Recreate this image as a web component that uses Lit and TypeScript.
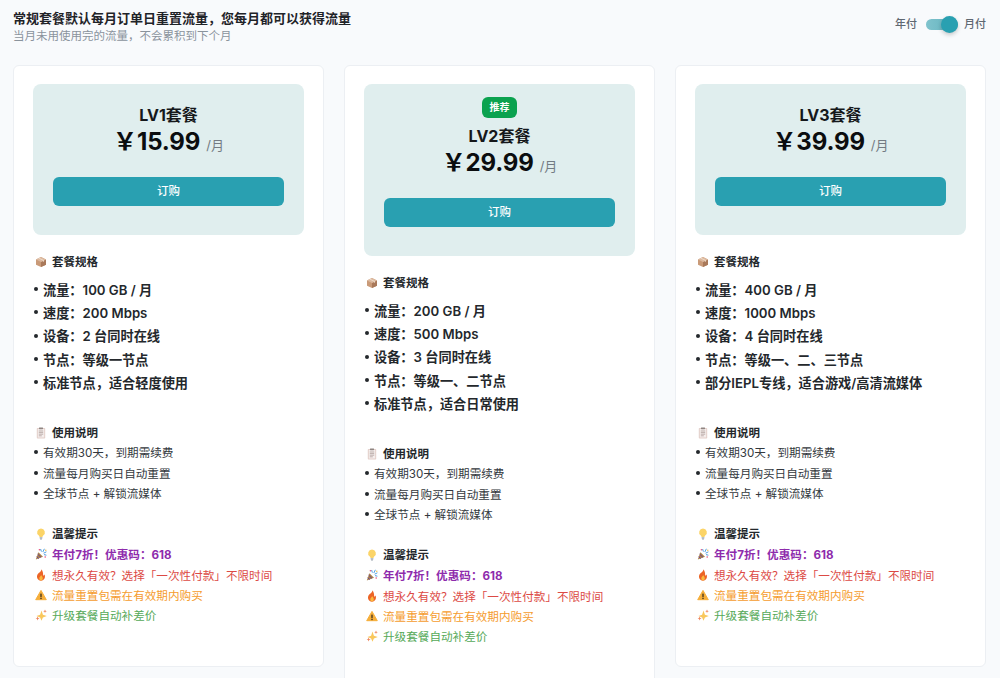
import { LitElement, css, html, svg } from "lit";
import { customElement } from "lit/decorators.js";

const icons = {
  box: svg`<path d="M6 1 11 3.4V8.7L6 11 1 8.7V3.4Z" fill="#c99a78"/><path d="M6 6 11 3.4V8.7L6 11Z" fill="#a9795a"/><path d="M1 3.4 6 1 11 3.4 6 6Z" fill="#dcb99f"/><path d="M3.2 2.3 8.3 4.7V6L9 5.7V4.3L4 1.8Z" fill="#eeddcc"/>`,
  note: svg`<rect x="1.800" y="1" width="8.400" height="10.500" rx=".8" fill="#e3cfca"/><rect x="2.800" y="2" width="6.400" height="8.500" fill="#f5eeec"/><rect x="4" y=".4" width="4" height="1.800" rx=".4" fill="#8f8582"/><path d="M3.800 4h4.400M3.800 5.600h4.400M3.800 7.200h4.400M3.800 8.800h3" stroke="#a89794" stroke-width=".7"/>`,
  bulb: svg`<path d="M6 .4a3.900 3.900 0 0 0-2.200 7.100c.5.4.7.9.7 1.400h3c0-.5.2-1 .7-1.400A3.900 3.900 0 0 0 6 .4Z" fill="#fbd468"/><rect x="4.500" y="8.900" width="3" height="1.600" rx=".5" fill="#b9c0c8"/><rect x="5.100" y="10.400" width="1.800" height="1" rx=".4" fill="#7b8794"/>`,
  party: svg`<path d="M.8 11.600 3.400 4.200l4.600 4.600Z" fill="#a98348"/><path d="M1.700 8.700 3.700 10.600M2.700 6.200 6 9.400" stroke="#6e3f97" stroke-width="1"/><path d="M5.600 1 6.400 3.600M9.400.8 7.800 4M11.400 3.800 8.600 5.200M11.400 7.200 9 6.600" stroke="#4f9fe0" stroke-width="1"/><circle cx="4.400" cy="1.800" r=".8" fill="#e8507c"/><circle cx="10.800" cy="2.200" r=".7" fill="#f2b93e"/><circle cx="10.200" cy="9" r=".8" fill="#e8507c"/>`,
  fire: svg`<path d="M6.200.3C6.800 2.500 4 3.400 2.500 5.600 1.200 7.800 2.500 11.700 6 11.700s4.700-3.600 3.500-6.100c-.4.800-.9 1.100-1.400 1.200C8.400 4.500 7.800 1.800 6.200.3Z" fill="#ec6526"/><path d="M6 6c.2 1-1.700 1.800-1.700 3.300 0 1.300.9 2.300 1.700 2.300s1.800-1 1.800-2.300C7.800 8 6.800 7 6 6Z" fill="#fbb93e"/>`,
  warn: svg`<path d="M6 1.400 11.300 10.700H.7Z" fill="#f6ae3a" stroke="#f6ae3a" stroke-linejoin="round"/><rect x="5.300" y="4.400" width="1.400" height="3.800" rx=".5" fill="#4a3a20"/><circle cx="6" cy="9.500" r=".8" fill="#4a3a20"/>`,
  spark: svg`<path d="M6.500 1.600 7.900 5.700l3.900 1.400-3.900 1.400-1.400 3.300-1.400-3.300L1.400 7.100 5.100 5.700Z" fill="#f9c75c"/><path d="M2.600 7.600 3.200 9 4.600 9.500 3.200 10 2.600 11.400 2 10 .6 9.500 2 9Z" fill="#ee8660"/><path d="M10 .4 10.500 1.800 11.800 2.300 10.500 2.800 10 4.100 9.500 2.800 8.200 2.300 9.500 1.800Z" fill="#ee8660"/>`,
};

type IconName = keyof typeof icons;

const icon = (name: IconName) =>
  html`<svg class="emoji" viewBox="0 0 12 12" aria-hidden="true">${icons[name]}</svg>`;

interface Plan {
  name: string;
  price: string;
  badge?: string;
  specs: string[];
}

const plans: Plan[] = [
  {
    name: "LV1套餐",
    price: "15.99",
    specs: [
      "流量：100 GB / 月",
      "速度：200 Mbps",
      "设备：2 台同时在线",
      "节点：等级一节点",
      "标准节点，适合轻度使用",
    ],
  },
  {
    name: "LV2套餐",
    price: "29.99",
    badge: "推荐",
    specs: [
      "流量：200 GB / 月",
      "速度：500 Mbps",
      "设备：3 台同时在线",
      "节点：等级一、二节点",
      "标准节点，适合日常使用",
    ],
  },
  {
    name: "LV3套餐",
    price: "39.99",
    specs: [
      "流量：400 GB / 月",
      "速度：1000 Mbps",
      "设备：4 台同时在线",
      "节点：等级一、二、三节点",
      "部分IEPL专线，适合游戏/高清流媒体",
    ],
  },
];

const usage = ["有效期30天，到期需续费", "流量每月购买日自动重置", "全球节点 + 解锁流媒体"];

const tips: { icon: IconName; text: string; cls: string }[] = [
  { icon: "party", text: "年付7折！优惠码：618", cls: "purple" },
  { icon: "fire", text: "想永久有效？选择「一次性付款」不限时间", cls: "red" },
  { icon: "warn", text: "流量重置包需在有效期内购买", cls: "orange" },
  { icon: "spark", text: "升级套餐自动补差价", cls: "green" },
];

@customElement("app-root")
export class AppRoot extends LitElement {
  static styles = css`
    :host {
      display: block;
      height: 678px;
      overflow: hidden;
      box-sizing: border-box;
      padding: 10px 14px 0 13px;
      background: #f8fafc;
      color: #1f2328;
      font-family: Inter, "Noto Sans CJK SC", sans-serif;
    }

    .top {
      display: flex;
      justify-content: space-between;
      align-items: flex-start;
      height: 55px;
    }

    .top h1 {
      margin: 0;
      font-size: 13px;
      line-height: 16px;
      font-weight: 700;
    }

    .top p {
      margin: 2px 0 0;
      font-size: 11.5px;
      line-height: 16px;
      color: #8a939c;
    }

    .switch {
      display: flex;
      align-items: center;
      gap: 8px;
      margin: 6px 0 0;
      font-size: 11px;
      line-height: 17px;
      font-weight: 500;
      color: #5f6871;
    }

    .track {
      position: relative;
      width: 32px;
      height: 11px;
      margin: 0 -2px 0 1px;
      border-radius: 6px;
      background: linear-gradient(90deg, #7fc3cd, #5fb0bc);
    }

    .thumb {
      position: absolute;
      right: 0;
      top: -3px;
      width: 17px;
      height: 17px;
      border-radius: 50%;
      background: #29a0b1;
      box-shadow: 0 2px 4px rgba(0, 0, 0, 0.2);
    }

    .cards {
      display: grid;
      grid-template-columns: repeat(3, 311px);
      gap: 20px;
      align-items: start;
    }

    .card {
      box-sizing: border-box;
      padding: 18px 19px 40px;
      background: #fff;
      border: 1px solid #eceff3;
      border-radius: 6px;
    }

    .hero {
      display: flex;
      flex-direction: column;
      align-items: center;
      padding: 20px 20px 29px;
      background: #e0eeee;
      border-radius: 8px;
    }

    .badge {
      margin: -7px 0 7px;
      padding: 0 7.5px;
      font-size: 10px;
      line-height: 21px;
      font-weight: 700;
      color: #fff;
      background: #0ba24f;
      border-radius: 6px;
    }

    .name {
      font-size: 16px;
      line-height: 22px;
      font-weight: 700;
      color: #15181b;
    }

    .price {
      display: flex;
      align-items: baseline;
      margin: 0 0 16px;
      font-size: 24px;
      line-height: 32px;
      font-weight: 700;
      letter-spacing: -0.15px;
      color: #0b0d0f;
    }

    .price small {
      margin-left: 6px;
      font-size: 13px;
      font-weight: 400;
      letter-spacing: 0;
      color: #737b83;
    }

    .buy {
      width: 100%;
      height: 29px;
      border: 0;
      border-radius: 6px;
      padding: 0;
      font: 500 11.5px/29px Inter, "Noto Sans CJK SC", sans-serif;
      color: #fff;
      background: #29a0b1;
    }

    .section {
      display: flex;
      align-items: center;
      gap: 5px;
      margin: 0 0 0 2px;
      font-size: 11.5px;
      line-height: 16px;
      font-weight: 700;
      color: #24282c;
    }

    .section.first {
      margin-top: 18.5px;
    }

    .emoji {
      flex: none;
      width: 12px;
      height: 12px;
    }

    ul {
      list-style: none;
      margin: 0;
      padding: 0;
    }

    li {
      display: flex;
      align-items: center;
    }

    li.dot::before {
      content: "";
      flex: none;
      width: 4px;
      height: 4px;
      margin: 0 5px 0 1px;
      border-radius: 50%;
      background: #24282c;
    }

    .specs {
      margin: 8px 0 31px;
    }

    .specs li {
      height: 23.3px;
      font-size: 13.2px;
      font-weight: 600;
      color: #24282c;
    }

    .usage {
      margin: 1px 0 22.5px;
    }

    .usage li {
      height: 20.5px;
      font-size: 11.6px;
      color: #33383d;
    }

    .tips {
      margin-top: 2px;
    }

    .tips li {
      gap: 5px;
      height: 20.4px;
      margin-left: 2px;
      font-size: 11.6px;
    }

    .purple {
      font-weight: 700;
      color: #8e2bac;
    }

    .red {
      color: #dc4a45;
    }

    .orange {
      color: #f59c2e;
    }

    .green {
      color: #55a958;
    }
  `;

  private renderCard(plan: Plan) {
    return html`
      <section class="card">
        <div class="hero">
          ${plan.badge ? html`<span class="badge">${plan.badge}</span>` : ""}
          <div class="name">${plan.name}</div>
          <div class="price">￥${plan.price}<small>/月</small></div>
          <button class="buy">订购</button>
        </div>
        <div class="section first">${icon("box")}套餐规格</div>
        <ul class="specs">
          ${plan.specs.map((s) => html`<li class="dot">${s}</li>`)}
        </ul>
        <div class="section">${icon("note")}使用说明</div>
        <ul class="usage">
          ${usage.map((s) => html`<li class="dot">${s}</li>`)}
        </ul>
        <div class="section">${icon("bulb")}温馨提示</div>
        <ul class="tips">
          ${tips.map(
            (t) => html`<li class=${t.cls}>${icon(t.icon)}${t.text}</li>`
          )}
        </ul>
      </section>
    `;
  }

  protected render() {
    return html`
      <header class="top">
        <div>
          <h1>常规套餐默认每月订单日重置流量，您每月都可以获得流量</h1>
          <p>当月未用使用完的流量，不会累积到下个月</p>
        </div>
        <div class="switch">
          <span>年付</span>
          <span class="track"><span class="thumb"></span></span>
          <span>月付</span>
        </div>
      </header>
      <div class="cards">${plans.map((p) => this.renderCard(p))}</div>
    `;
  }
}
